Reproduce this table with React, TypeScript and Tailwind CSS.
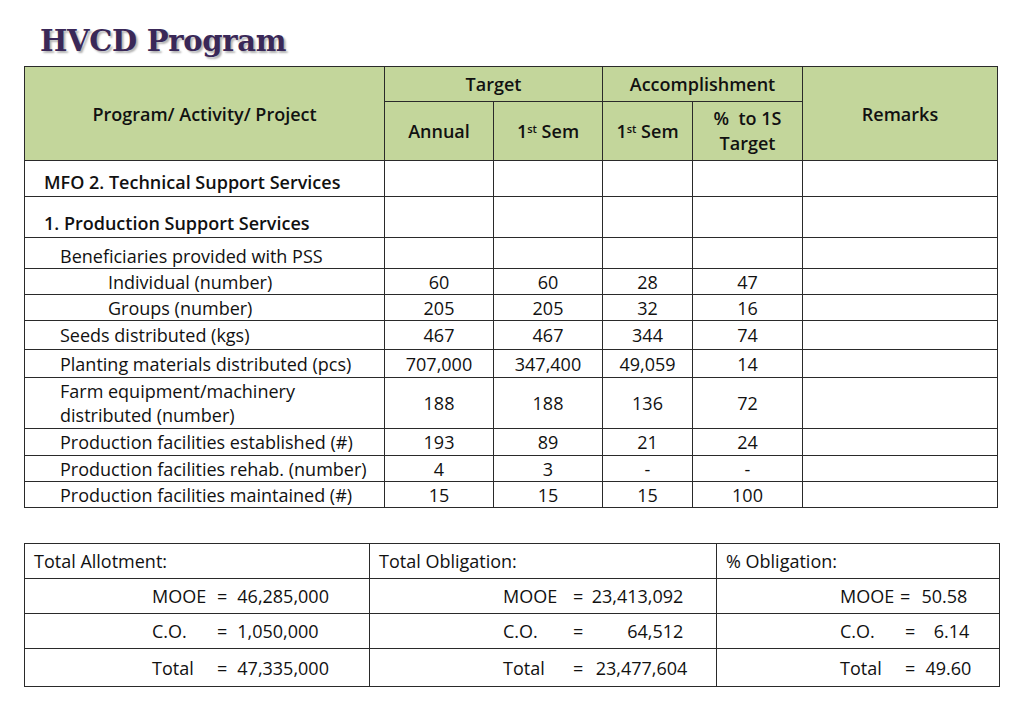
import React from "react";

const B = "border border-[#2a2a2a]";

function Sem() {
  return (
    <span>
      1<sup className="text-[11px] align-[5px] relative top-0">st</sup> Sem
    </span>
  );
}

type Row = { label: string; indent: number; bold?: boolean; h: number; vals: string[]; align?: string };

const rows: Row[] = [
  { label: "MFO 2. Technical Support Services", indent: 19, bold: true, h: 36, vals: ["", "", "", ""], align: "align-bottom pb-[2px]" },
  { label: "1. Production Support Services", indent: 19, bold: true, h: 41, vals: ["", "", "", ""], align: "align-bottom pb-[2px]" },
  { label: "Beneficiaries provided with PSS", indent: 35, h: 31, vals: ["", "", "", ""], align: "align-bottom pb-0" },
  { label: "Individual (number)", indent: 83, h: 26, vals: ["60", "60", "28", "47"] },
  { label: "Groups (number)", indent: 83, h: 26, vals: ["205", "205", "32", "16"] },
  { label: "Seeds distributed (kgs)", indent: 35, h: 29, vals: ["467", "467", "344", "74"] },
  { label: "Planting materials distributed (pcs)", indent: 35, h: 28, vals: ["707,000", "347,400", "49,059", "14"] },
  { label: "Farm equipment/machinery distributed (number)", indent: 35, h: 51, vals: ["188", "188", "136", "72"] },
  { label: "Production facilities established (#)", indent: 35, h: 27, vals: ["193", "89", "21", "24"] },
  { label: "Production facilities rehab. (number)", indent: 35, h: 26, vals: ["4", "3", "-", "-"] },
  { label: "Production facilities maintained (#)", indent: 35, h: 26, vals: ["15", "15", "15", "100"] },
];

function Eq({ label, lw, value, vw, right }: { label: string; lw: string; value: string; vw: string; right?: boolean }) {
  return (
    <div className="flex items-center whitespace-nowrap">
      <span className={lw}>{label}</span>
      <span>=</span>
      <span className={`${vw} ${right ? "text-right" : "text-left pl-[10px]"}`}>{value}</span>
    </div>
  );
}

export default function App() {
  const font = { fontFamily: "'Open Sans', 'Noto Sans', sans-serif" };
  return (
    <div className="w-[1023px] h-[708px] bg-white text-[#111] relative overflow-hidden" style={font}>
      <div className="pl-[40px] pt-[23px] h-[66px]">
        <h1
          className="text-[29px] font-bold leading-[36px] text-[#3a2858] tracking-[-0.3px]"
          style={{ fontFamily: "'DejaVu Serif', 'Liberation Serif', serif", textShadow: "2px 2px 2px rgba(0,0,0,0.3)" }}
        >
          HVCD Program
        </h1>
      </div>
      <table className="ml-[24px] border-collapse table-fixed text-[18px] leading-[24px]">
        <colgroup>
          <col className="w-[360px]" />
          <col className="w-[109px]" />
          <col className="w-[109px]" />
          <col className="w-[90px]" />
          <col className="w-[110px]" />
          <col className="w-[195px]" />
        </colgroup>
        <thead className="bg-[#c3d69b] font-bold">
          <tr className="h-[35px]">
            <th rowSpan={2} className={`${B} font-semibold`}>Program/ Activity/ Project</th>
            <th colSpan={2} className={`${B} font-semibold`}>Target</th>
            <th colSpan={2} className={`${B} font-semibold`}>Accomplishment</th>
            <th rowSpan={2} className={`${B} font-semibold`}>Remarks</th>
          </tr>
          <tr className="h-[59px]">
            <th className={`${B} font-semibold`}>Annual</th>
            <th className={`${B} font-semibold`}><Sem /></th>
            <th className={`${B} font-semibold`}><Sem /></th>
            <th className={`${B} font-semibold leading-[25px]`}>%&nbsp; to 1S<br />Target</th>
          </tr>
        </thead>
        <tbody>
          {rows.map((r, i) => (
            <tr key={i} style={{ height: r.h }}>
              <td
                className={`${B} ${r.bold ? "font-semibold" : ""} ${r.align ?? "align-middle"} pr-1 leading-[24px]`}
                style={{ paddingLeft: r.indent }}
              >
                {r.label}
              </td>
              {r.vals.map((v, j) => (
                <td key={j} className={`${B} text-center align-middle`}>{v}</td>
              ))}
              <td className={B}></td>
            </tr>
          ))}
        </tbody>
      </table>

      <table className="ml-[24px] mt-[35px] border-collapse table-fixed text-[18px] leading-[24px]">
        <colgroup>
          <col className="w-[345px]" />
          <col className="w-[347px]" />
          <col className="w-[283px]" />
        </colgroup>
        <tbody>
          <tr className="h-[35px]">
            <td className={`${B} pl-[9px]`}>Total Allotment:</td>
            <td className={`${B} pl-[9px]`}>Total Obligation:</td>
            <td className={`${B} pl-[9px]`}>% Obligation:</td>
          </tr>
          <tr className="h-[35px]">
            <td className={`${B} pl-[127px]`}><Eq label="MOOE" lw="w-[65px]" value="46,285,000" vw="w-[130px]" /></td>
            <td className={`${B} pl-[133px]`}><Eq label="MOOE" lw="w-[70px]" value="23,413,092" vw="w-[100px]" right /></td>
            <td className={`${B} pl-[123px]`}><Eq label="MOOE" lw="w-[60px]" value="50.58" vw="w-[57px]" right /></td>
          </tr>
          <tr className="h-[35px]">
            <td className={`${B} pl-[127px]`}><Eq label="C.O." lw="w-[65px]" value="1,050,000" vw="w-[130px]" /></td>
            <td className={`${B} pl-[133px]`}><Eq label="C.O." lw="w-[70px]" value="64,512" vw="w-[100px]" right /></td>
            <td className={`${B} pl-[123px]`}><Eq label="C.O." lw="w-[65px]" value="6.14" vw="w-[54px]" right /></td>
          </tr>
          <tr className="h-[38px]">
            <td className={`${B} pl-[127px]`}><Eq label="Total" lw="w-[65px]" value="47,335,000" vw="w-[130px]" /></td>
            <td className={`${B} pl-[133px]`}><Eq label="Total" lw="w-[70px]" value="23,477,604" vw="w-[104px]" right /></td>
            <td className={`${B} pl-[123px]`}><Eq label="Total" lw="w-[65px]" value="49.60" vw="w-[56px]" right /></td>
          </tr>
        </tbody>
      </table>
    </div>
  );
}
